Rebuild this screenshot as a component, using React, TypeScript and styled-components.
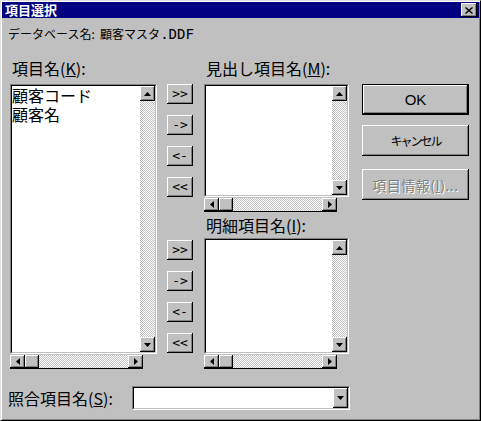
import styled, { createGlobalStyle, css } from "styled-components";

const GlobalStyle = createGlobalStyle`
  html, body {
    margin: 0;
    padding: 0;
    background: #c0c0c0;
  }
  body {
    width: 481px;
    height: 421px;
    overflow: hidden;
    font-family: "Noto Sans CJK JP", "Noto Sans", sans-serif;
  }
`;

const raised = css`
  background: #c0c0c0;
  box-shadow: inset -1px -1px #000, inset 1px 1px #fff, inset -2px -2px #808080;
`;

const checker = css`
  background-color: #fff;
  background-image: conic-gradient(#c0c0c0 25%, #fff 0 50%, #c0c0c0 0 75%, #fff 0);
  background-size: 2px 2px;
`;

const Dialog = styled.div`
  box-sizing: border-box;
  width: 481px;
  height: 421px;
  padding: 1px;
  background: #c0c0c0;
  border: 1px solid;
  border-color: #dfdfdf #000 #000 #dfdfdf;
  box-shadow: inset 1px 1px #fff, inset -1px -1px #808080;
  display: flex;
  flex-direction: column;
`;

const TitleBar = styled.div`
  height: 16px;
  background: #000080;
  color: #fff;
  display: flex;
  align-items: center;
  justify-content: space-between;
  padding: 0 2px 0 3px;
  font-size: 13px;
  font-weight: bold;
  line-height: 16px;
`;

const CloseButton = styled.div`
  ${raised};
  width: 16px;
  height: 14px;
  display: flex;
  align-items: center;
  justify-content: center;
`;

const Body = styled.div`
  padding: 8px 0 0 6px;
  display: flex;
  flex-direction: column;
`;

const DbLine = styled.div`
  font-size: 12px;
  line-height: 16px;
  height: 16px;
  color: #000;
  white-space: pre;
`;

const Latin = styled.span`
  font-family: "DejaVu Sans Mono", monospace;
  font-size: 14px;
`;

const Columns = styled.div`
  margin-top: 18px;
  margin-left: 2px;
  display: flex;
  align-items: flex-start;
`;

const Column = styled.div<{ $w: number; $gap: number; $top?: number }>`
  width: ${(p) => p.$w}px;
  margin-left: ${(p) => p.$gap}px;
  padding-top: ${(p) => p.$top ?? 0}px;
  display: flex;
  flex-direction: column;
`;

const Label = styled.div<{ $h: number }>`
  height: ${(p) => p.$h}px;
  font-size: 16px;
  line-height: 16px;
  padding-left: 2px;
  color: #000;
  white-space: nowrap;
`;

const ListFrame = styled.div<{ $h: number }>`
  box-sizing: border-box;
  height: ${(p) => p.$h}px;
  border: 1px solid;
  border-color: #808080 #fff #fff #808080;
  display: flex;
`;

const ListInner = styled.div`
  flex: 1;
  border: 1px solid;
  border-color: #000 #c0c0c0 #c0c0c0 #000;
  display: flex;
  min-width: 0;
`;

const ListArea = styled.div`
  flex: 1;
  background: #fff;
  padding-left: 0;
  font-size: 16px;
  line-height: 19px;
  color: #000;
  white-space: nowrap;
  overflow: hidden;
`;

const VScroll = styled.div`
  width: 15px;
  display: flex;
  flex-direction: column;
`;

const Track = styled.div`
  flex: 1;
  ${checker};
`;

const ScrollBtn = styled.div<{ $w: number; $h: number }>`
  ${raised};
  width: ${(p) => p.$w}px;
  height: ${(p) => p.$h}px;
  flex: none;
  display: flex;
  align-items: center;
  justify-content: center;
`;

const HScroll = styled.div`
  margin-top: 1px;
  width: 133px;
  height: 13px;
  display: flex;
  border-bottom: 1px solid #000;
`;

const Thumb = styled.div`
  ${raised};
  width: 14px;
  flex: none;
`;

const ArrowButton = styled.div`
  ${raised};
  box-sizing: border-box;
  width: 26px;
  height: 20px;
  margin-bottom: 11px;
  display: flex;
  align-items: center;
  justify-content: center;
  font-family: "DejaVu Sans Mono", monospace;
  font-size: 13px;
  letter-spacing: 0;
  color: #000;
  padding-bottom: 2px;
`;

const Spacer = styled.div<{ $h: number }>`
  height: ${(p) => p.$h}px;
`;

const PushButton = styled.div<{ $default?: boolean; $disabled?: boolean; $mt: number }>`
  box-sizing: border-box;
  height: 31px;
  margin-top: ${(p) => p.$mt}px;
  background: #c0c0c0;
  display: flex;
  align-items: center;
  justify-content: center;
  font-size: 13px;
  line-height: 16px;
  color: ${(p) => (p.$disabled ? "#808080" : "#000")};
  text-shadow: ${(p) => (p.$disabled ? "1px 1px #fff" : "none")};
  border: 1px solid ${(p) => (p.$default ? "#000" : "transparent")};
  box-shadow: inset -1px -1px #000, inset 1px 1px #fff, inset -2px -2px #808080;
  ${(p) =>
    !p.$default &&
    css`
      border: none;
    `}
`;

const OkText = styled.span`
  font-family: "Liberation Sans", sans-serif;
  font-size: 15px;
`;

const Narrow = styled.span`
  letter-spacing: -2px;
  font-size: 12px;
`;

const InfoText = styled.span`
  font-size: 14px;
  letter-spacing: 0.5px;
`;

const BottomRow = styled.div`
  margin-top: 17px;
  display: flex;
  align-items: center;
`;

const ComboLabel = styled.div`
  width: 124px;
  font-size: 16px;
  line-height: 16px;
  color: #000;
  white-space: nowrap;
`;

const Combo = styled.div`
  box-sizing: border-box;
  width: 218px;
  height: 24px;
  border: 1px solid;
  border-color: #808080 #fff #fff #808080;
  display: flex;
`;

const ComboInner = styled.div`
  flex: 1;
  background: #fff;
  border: 1px solid;
  border-color: #000 #c0c0c0 #c0c0c0 #000;
  display: flex;
  justify-content: flex-end;
`;

const Up = () => (
  <svg width="7" height="4" viewBox="0 0 7 4">
    <polygon points="3.5,0 7,4 0,4" fill="#000" />
  </svg>
);
const Down = () => (
  <svg width="7" height="4" viewBox="0 0 7 4">
    <polygon points="0,0 7,0 3.5,4" fill="#000" />
  </svg>
);
const Left = () => (
  <svg width="4" height="7" viewBox="0 0 4 7">
    <polygon points="4,0 4,7 0,3.5" fill="#000" />
  </svg>
);
const Right = () => (
  <svg width="4" height="7" viewBox="0 0 4 7">
    <polygon points="0,0 4,3.5 0,7" fill="#000" />
  </svg>
);

const ListBox = ({ height, items = [] }: { height: number; items?: string[] }) => (
  <ListFrame $h={height}>
    <ListInner>
      <ListArea>
        {items.map((it) => (
          <div key={it}>{it}</div>
        ))}
      </ListArea>
      <VScroll>
        <ScrollBtn $w={15} $h={15}>
          <Up />
        </ScrollBtn>
        <Track />
        <ScrollBtn $w={15} $h={15}>
          <Down />
        </ScrollBtn>
      </VScroll>
    </ListInner>
  </ListFrame>
);

const HBar = () => (
  <HScroll>
    <ScrollBtn $w={15} $h={13}>
      <Left />
    </ScrollBtn>
    <Thumb />
    <Track />
    <ScrollBtn $w={15} $h={13}>
      <Right />
    </ScrollBtn>
  </HScroll>
);

const MoveButtons = () => (
  <>
    <ArrowButton>&gt;&gt;</ArrowButton>
    <ArrowButton>-&gt;</ArrowButton>
    <ArrowButton>&lt;-</ArrowButton>
    <ArrowButton>&lt;&lt;</ArrowButton>
  </>
);

export default function App() {
  return (
    <>
      <GlobalStyle />
      <Dialog>
        <TitleBar>
          <span>項目選択</span>
          <CloseButton>
            <svg width="8" height="7" viewBox="0 0 8 7">
              <path d="M0.5 0.5 L7.5 6.5 M7.5 0.5 L0.5 6.5" stroke="#000" strokeWidth="1.4" />
            </svg>
          </CloseButton>
        </TitleBar>
        <Body>
          <DbLine>
            {"データベース名:  顧客マスタ"}
            <Latin>.DDF</Latin>
          </DbLine>
          <Columns>
            <Column $w={147} $gap={0}>
              <Label $h={24}>
                項目名(<u>K</u>):
              </Label>
              <ListBox height={270} items={["顧客コード", "顧客名"]} />
              <HBar />
            </Column>
            <Column $w={26} $gap={10} $top={24}>
              <MoveButtons />
              <Spacer $h={32} />
              <MoveButtons />
            </Column>
            <Column $w={145} $gap={11}>
              <Label $h={24}>
                見出し項目名(<u>M</u>):
              </Label>
              <ListBox height={113} />
              <HBar />
              <Spacer $h={5} />
              <Label $h={21}>
                明細項目名(<u>I</u>):
              </Label>
              <ListBox height={116} />
              <HBar />
            </Column>
            <Column $w={107} $gap={13} $top={24}>
              <PushButton $default $mt={0}>
                <OkText>OK</OkText>
              </PushButton>
              <PushButton $mt={10}>
                <Narrow>キャンセル</Narrow>
              </PushButton>
              <PushButton $disabled $mt={13}>
                <InfoText>
                  項目情報(<u>I</u>)...
                </InfoText>
              </PushButton>
            </Column>
          </Columns>
          <BottomRow>
            <ComboLabel>
              照合項目名(<u>S</u>):
            </ComboLabel>
            <Combo>
              <ComboInner>
                <ScrollBtn $w={15} $h={20}>
                  <Down />
                </ScrollBtn>
              </ComboInner>
            </Combo>
          </BottomRow>
        </Body>
      </Dialog>
    </>
  );
}
